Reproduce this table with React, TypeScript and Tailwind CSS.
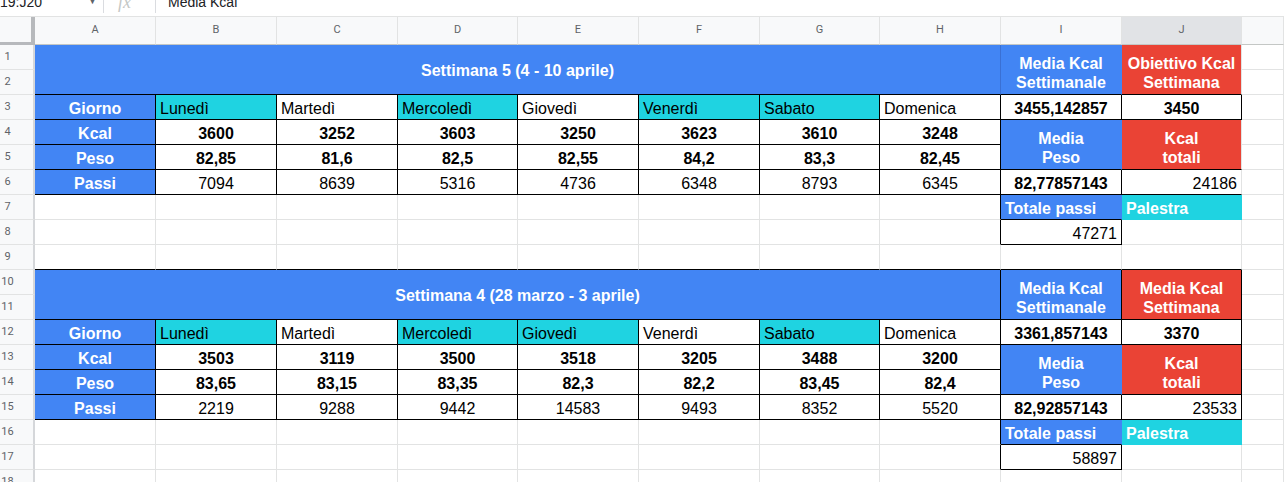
import type { ReactNode } from 'react';

// One spreadsheet cell. r / b are the right and bottom border colour classes.
type Cell = {
  t?: string;
  cls?: string;
  span?: string;
  align?: 'l' | 'c' | 'r';
  two?: boolean;
  r?: string;
  b?: string;
};

type Week = {
  title: string;
  goal: string;
  cyan: number[];
  kcal: string[];
  peso: string[];
  passi: string[];
  media: string;
  obiettivo: string;
  mediaPeso: string;
  kcalTot: string;
  passiTot: string;
};

const weeks: Week[] = [
  {
    title: 'Settimana 5 (4 - 10 aprile)',
    goal: 'Obiettivo Kcal|Settimana',
    cyan: [1, 0, 1, 0, 1, 1, 0],
    kcal: ['3600', '3252', '3603', '3250', '3623', '3610', '3248'],
    peso: ['82,85', '81,6', '82,5', '82,55', '84,2', '83,3', '82,45'],
    passi: ['7094', '8639', '5316', '4736', '6348', '8793', '6345'],
    media: '3455,142857',
    obiettivo: '3450',
    mediaPeso: '82,77857143',
    kcalTot: '24186',
    passiTot: '47271',
  },
  {
    title: 'Settimana 4 (28 marzo - 3 aprile)',
    goal: 'Media Kcal|Settimana',
    cyan: [1, 0, 1, 1, 0, 1, 0],
    kcal: ['3503', '3119', '3500', '3518', '3205', '3488', '3200'],
    peso: ['83,65', '83,15', '83,35', '82,3', '82,2', '83,45', '82,4'],
    passi: ['2219', '9288', '9442', '14583', '9493', '8352', '5520'],
    media: '3361,857143',
    obiettivo: '3370',
    mediaPeso: '82,92857143',
    kcalTot: '23533',
    passiTot: '58897',
  },
];

const days = ['Lunedì', 'Martedì', 'Mercoledì', 'Giovedì', 'Venerdì', 'Sabato', 'Domenica'];
const letters = ['A', 'B', 'C', 'D', 'E', 'F', 'G', 'H', 'I', 'J', ''];

const BLUE = 'bg-[#4285f4] text-white font-bold';
const RED = 'bg-[#ea4335] text-white font-bold';
const CYAN = 'bg-[#1fd3e1]';
const DARK = 'border-r-black';
const DARKB = 'border-b-black';

const ROWS = 18;
const COLS = 11;

function buildSheet() {
  const map: (Cell | undefined)[][] = Array.from({ length: ROWS + 1 }, () => Array(COLS).fill(undefined));
  const covered: boolean[][] = Array.from({ length: ROWS + 1 }, () => Array(COLS).fill(false));

  const put = (row: number, col: number, cell: Cell, w = 1, h = 1) => {
    map[row][col] = cell;
    for (let y = row; y < row + h; y++)
      for (let x = col; x < col + w; x++) if (y !== row || x !== col) covered[y][x] = true;
  };

  weeks.forEach((w, i) => {
    const top = i === 0 ? 1 : 10;
    const first = i === 0;

    put(top, 0, {
      t: w.title, span: 'col-span-8 row-span-2', cls: BLUE, align: 'c',
      r: first ? 'border-r-[#3a70d4]' : DARK, b: DARKB,
    }, 8, 2);
    put(top, 8, {
      t: 'Media Kcal|Settimanale', span: 'row-span-2', cls: BLUE, two: true,
      r: first ? 'border-r-[#4285f4]' : DARK, b: DARKB,
    }, 1, 2);
    put(top, 9, { t: w.goal, span: 'row-span-2', cls: RED, two: true, r: first ? undefined : DARK, b: DARKB }, 1, 2);

    ['Giorno', 'Kcal', 'Peso', 'Passi'].forEach((label, k) => {
      put(top + 2 + k, 0, { t: label, cls: BLUE, align: 'c', r: DARK, b: DARKB });
    });

    days.forEach((d, k) => {
      put(top + 2, k + 1, { t: d, cls: w.cyan[k] ? CYAN : '', align: 'l', r: DARK, b: DARKB });
      put(top + 3, k + 1, { t: w.kcal[k], cls: 'font-bold', align: 'c', r: DARK, b: DARKB });
      put(top + 4, k + 1, { t: w.peso[k], cls: 'font-bold', align: 'c', r: DARK, b: DARKB });
      put(top + 5, k + 1, { t: w.passi[k], align: 'c', r: DARK, b: DARKB });
    });

    put(top + 2, 8, { t: w.media, cls: 'font-bold', align: 'c', r: DARK, b: DARKB });
    put(top + 2, 9, { t: w.obiettivo, cls: 'font-bold', align: 'c', r: DARK, b: DARKB });
    put(top + 3, 8, { t: 'Media|Peso', span: 'row-span-2', cls: BLUE, two: true, r: 'border-r-[#4285f4]', b: DARKB }, 1, 2);
    put(top + 3, 9, { t: 'Kcal|totali', span: 'row-span-2', cls: RED, two: true, r: first ? undefined : DARK, b: DARKB }, 1, 2);
    put(top + 5, 8, { t: w.mediaPeso, cls: 'font-bold', align: 'c', r: DARK, b: DARKB });
    put(top + 5, 9, { t: w.kcalTot, align: 'r', r: first ? undefined : DARK, b: DARKB });

    put(top + 6, 7, { r: DARK });
    put(top + 7, 7, { r: DARK });
    put(top + 6, 8, { t: 'Totale passi', cls: BLUE, align: 'l', r: 'border-r-[#4285f4]', b: DARKB });
    put(top + 6, 9, { t: 'Palestra', cls: CYAN + ' text-white font-bold', align: 'l', r: 'border-r-[#1fd3e1]', b: 'border-b-[#1fd3e1]' });
    put(top + 7, 8, { t: w.passiTot, align: 'r', r: DARK, b: DARKB });
  });

  // row 9 carries the top edge of the second table
  for (let c = 0; c < 10; c++) put(9, c, { b: DARKB });

  return { map, covered };
}

function SheetCell({ cell }: { cell?: Cell }) {
  const c = cell ?? {};
  const align =
    c.align === 'l' ? 'items-center justify-start' : c.align === 'r' ? 'items-center justify-end' : 'items-center justify-center';
  const lines: ReactNode = c.two
    ? c.t?.split('|').map((s) => <span key={s}>{s}</span>)
    : c.t;

  return (
    <div
      className={`flex overflow-hidden whitespace-nowrap border-r border-b px-[4px] pt-[2px] text-[16px] leading-[19px] text-black ${
        c.span ?? ''
      } ${c.cls ?? 'bg-white'} ${c.r ?? 'border-r-[#e2e3e3]'} ${c.b ?? 'border-b-[#e2e3e3]'} ${
        c.two ? 'flex-col items-center justify-end pb-[2px] text-center' : align
      }`}
    >
      {lines}
    </div>
  );
}

export default function App() {
  const { map, covered } = buildSheet();

  return (
    <div className="h-[482px] w-[1284px] overflow-hidden bg-white font-['Liberation_Sans',Arial,sans-serif]">
      {/* Formula bar, cut off at the top */}
      <div className="h-[17px] overflow-hidden border-b border-[#e2e3e3]">
        <div className="-mt-[10px] flex h-[24px] items-center text-[14px] text-[#202124]">
          <span className="w-[88px] pl-[0px]">19:J20</span>
          <span className="w-[15px] text-[9px] text-[#5f6368]">▼</span>
          <span className="h-[22px] w-px bg-[#dadce0]" />
          <span className="w-[51px] pl-[14px] font-['Liberation_Serif',serif] text-[18px] italic text-[#c4c7c5]">fx</span>
          <span className="h-[22px] w-px bg-[#dadce0]" />
          <span className="pl-[12px]">Media Kcal</span>
        </div>
      </div>

      <div className="grid grid-cols-[35px_121px_121px_121px_120px_121px_121px_120px_121px_121px_120px_1fr] grid-rows-[28px_repeat(18,25px)]">
        {/* column headers */}
        <div className="border-r-4 border-b-[3px] border-[#b7b9bc] bg-[#f8f9fa]" />
        {letters.map((l, i) => (
          <div
            key={i}
            className={`flex items-center justify-center border-r border-b border-r-[#e2e3e3] border-b-[#c4c7c5] font-['Roboto',sans-serif] text-[11px] text-[#5f6368] ${
              l === 'J' ? 'bg-[#e1e3e6]' : 'bg-[#f8f9fa]'
            }`}
          >
            {l}
          </div>
        ))}

        {Array.from({ length: ROWS }, (_, i) => i + 1).map((row) => [
          <div
            key={`h${row}`}
            className="flex items-center border-r-2 border-b border-r-[#d5d7da] border-b-[#e2e3e3] bg-[#f8f9fa] font-['Roboto',sans-serif] text-[11px] text-[#5f6368]"
          >
            <span className="w-[15px] text-center">{row}</span>
          </div>,
          ...map[row].map((cell, col) =>
            covered[row][col] ? null : <SheetCell key={`${row}-${col}`} cell={cell} />
          ),
        ])}
      </div>
    </div>
  );
}
